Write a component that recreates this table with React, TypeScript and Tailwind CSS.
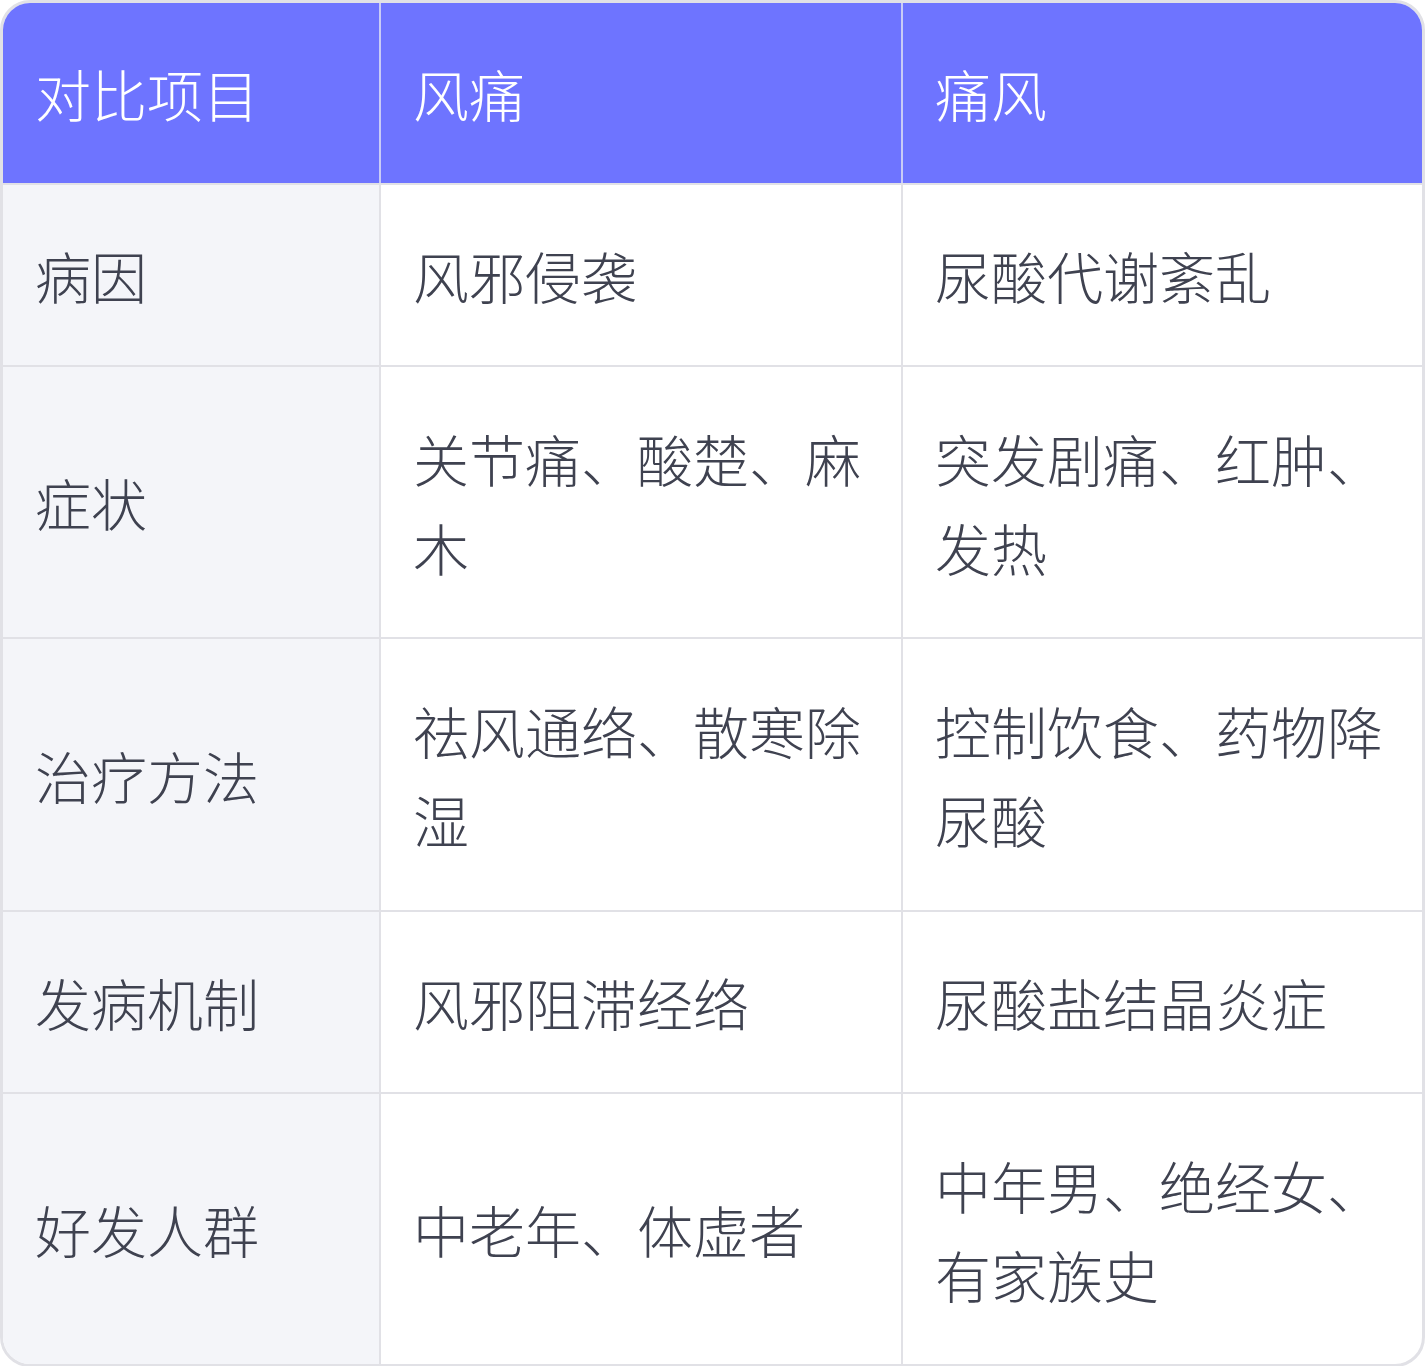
const header = ["对比项目", "风痛", "痛风"];

const rows: [string, string, string][] = [
  ["病因", "风邪侵袭", "尿酸代谢紊乱"],
  ["症状", "关节痛、酸楚、麻木", "突发剧痛、红肿、发热"],
  ["治疗方法", "祛风通络、散寒除湿", "控制饮食、药物降尿酸"],
  ["发病机制", "风邪阻滞经络", "尿酸盐结晶炎症"],
  ["好发人群", "中老年、体虚者", "中年男、绝经女、有家族史"],
];

export default function App() {
  return (
    <div className="w-[1425px] bg-white">
      <div
        className="w-[1425px] overflow-hidden rounded-[30px] border-[3px] border-[#e1e1e6] bg-white"
        style={{ fontFamily: '"Noto Sans CJK SC", "Noto Sans", sans-serif' }}
      >
        <div className="grid grid-cols-[376px_522px_1fr] bg-[#6e74ff]">
          {header.map((h, i) => (
            <div
              key={h}
              className={`px-[32px] py-[45px] text-[56px] font-light leading-[1.6] text-white ${
                i > 0 ? "border-l-2 border-[#c9cbf6]" : ""
              }`}
            >
              {h}
            </div>
          ))}
        </div>
        {rows.map((r) => (
          <div
            key={r[0]}
            className="grid grid-cols-[376px_522px_1fr] border-t-2 border-[#e1e1e6]"
          >
            <div className="flex items-center bg-[#f4f5f9] px-[32px] py-[45.5px] text-[56px] font-light leading-[1.6] text-[#3f4250]">
              {r[0]}
            </div>
            <div className="flex items-center border-l-2 border-[#e1e1e6] px-[32px] py-[45.5px] text-[56px] font-light leading-[1.6] text-[#3f4250]">
              {r[1]}
            </div>
            <div className="flex items-center border-l-2 border-[#e1e1e6] px-[32px] py-[45.5px] text-[56px] font-light leading-[1.6] text-[#3f4250]">
              {r[2]}
            </div>
          </div>
        ))}
      </div>
    </div>
  );
}
